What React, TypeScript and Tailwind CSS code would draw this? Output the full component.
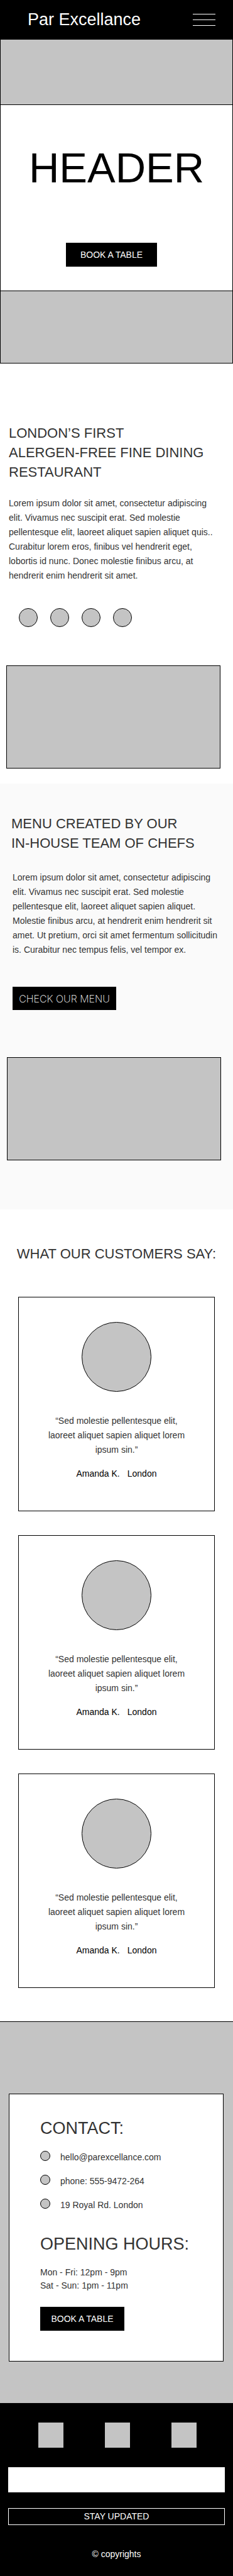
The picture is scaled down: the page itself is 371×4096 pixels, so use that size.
import type { ReactNode } from "react";

const DOTS = [1, 2, 3, 4];
const TESTIMONIALS = [1, 2, 3];
const SOCIALS = ["Facebook", "Instagram", "Twitter"];

const CONTACTS = [
  { text: "hello@parexcellance.com", href: "mailto:hello@parexcellance.com" },
  { text: "phone: 555-9472-264", href: "tel:5559472264" },
  { text: "19 Royal Rd. London", href: "#map" },
];

function Picture({ className }: { className: string }) {
  return <div className={`h-[164px] border border-black bg-[#c4c4c4] ${className}`} />;
}

function Title({ children, className }: { children: ReactNode; className: string }) {
  return <h2 className={`text-[22px] leading-[31px] ${className}`}>{children}</h2>;
}

function Testimonial() {
  return (
    <figure className="flex flex-col items-center border border-black bg-white pt-[39px] pb-[47px] text-center">
      <div className="size-[111px] rounded-full border border-black bg-[#c4c4c4]" />
      <blockquote className="mt-[35px] leading-[23px]">
        “Sed molestie pellentesque elit,
        <br />
        laoreet aliquet sapien aliquet lorem
        <br />
        ipsum sin.”
      </blockquote>
      <figcaption className="mt-[15px] flex gap-3 leading-[23px] text-black">
        <span>Amanda K.</span>
        <span>London</span>
      </figcaption>
    </figure>
  );
}

export default function App() {
  return (
    <div className="bg-white font-['Liberation_Sans',Arial,sans-serif] text-[14px] text-[#333333]">
      <header className="flex h-[62px] items-center justify-between bg-black pr-7 pl-11">
        <a href="#top" className="text-[27px] leading-9 text-white">
          Par Excellance
        </a>
        <button type="button" aria-label="Open menu" className="flex w-9 flex-col gap-2">
          <span className="h-px w-full bg-white" />
          <span className="h-px w-full bg-white" />
          <span className="h-px w-full bg-white" />
        </button>
      </header>

      <main>
        <section className="border border-black bg-[#c4c4c4] pt-[103px] pb-[114px]">
          <div className="flex flex-col items-center border-y border-black bg-white pt-[60px] pb-[38px]">
            <h1 className="text-[67px] leading-[80px] text-black">HEADER</h1>
            <button type="button" className="mt-[79px] mr-4 h-[38px] w-[145px] bg-black text-white">
              BOOK A TABLE
            </button>
          </div>
        </section>

        <section className="pt-[95px] pb-6">
          <Title className="px-3.5">
            LONDON’S FIRST
            <br />
            ALERGEN-FREE FINE DINING
            <br />
            RESTAURANT
          </Title>
          <p className="mt-[23px] px-3.5 leading-[23px]">
            Lorem ipsum dolor sit amet, consectetur adipiscing
            <br />
            elit. Vivamus nec suscipit erat. Sed molestie
            <br />
            pellentesque elit, laoreet aliquet sapien aliquet quis..
            <br />
            Curabitur lorem eros, finibus vel hendrerit eget,
            <br />
            lobortis id nunc. Donec molestie finibus arcu, at
            <br />
            hendrerit enim hendrerit sit amet.
          </p>
          <div className="mt-10 flex gap-5 pl-[30px]">
            {DOTS.map((n) => (
              <span key={n} className="size-[30px] rounded-full border border-black bg-[#c4c4c4]" />
            ))}
          </div>
          <Picture className="mt-[61px] mr-5 ml-2.5" />
        </section>

        <section className="bg-[#fafafa] pt-12 pb-[78px]">
          <Title className="px-[18px]">
            MENU CREATED BY OUR
            <br />
            IN-HOUSE TEAM OF CHEFS
          </Title>
          <p className="mt-7 pl-5 leading-[23px]">
            Lorem ipsum dolor sit amet, consectetur adipiscing
            <br />
            elit. Vivamus nec suscipit erat. Sed molestie
            <br />
            pellentesque elit, laoreet aliquet sapien aliquet.
            <br />
            Molestie finibus arcu, at hendrerit enim hendrerit sit
            <br />
            amet. Ut pretium, orci sit amet fermentum sollicitudin
            <br />
            is. Curabitur nec tempus felis, vel tempor ex.
          </p>
          <button
            type="button"
            className="mt-[47px] ml-5 block h-[37px] w-[165px] bg-black font-['Inter',sans-serif] text-[16px] font-extralight text-white"
          >
            CHECK OUR MENU
          </button>
          <Picture className="mt-[75px] mr-[19px] ml-[11px]" />
        </section>

        <section className="px-[29px] pt-[55px] pb-[53px]">
          <Title className="-mx-4 text-center">WHAT OUR CUSTOMERS SAY:</Title>
          <div className="mt-[53px] flex flex-col gap-[38px]">
            {TESTIMONIALS.map((n) => (
              <Testimonial key={n} />
            ))}
          </div>
        </section>

        <section className="border-t border-black bg-[#c4c4c4] pt-[114px] pr-[15px] pb-[66px] pl-3.5">
          <div className="border border-black bg-white pt-9 pr-6 pb-12 pl-[49px]">
            <h2 className="text-[27px] leading-9">CONTACT:</h2>
            <ul className="mt-[18px] flex flex-col gap-[18px] leading-5">
              {CONTACTS.map((c) => (
                <li key={c.text} className="flex items-start gap-4">
                  <span className="size-4 rounded-full border border-black bg-[#c4c4c4]" />
                  <a href={c.href}>{c.text}</a>
                </li>
              ))}
            </ul>
            <h2 className="mt-[34px] text-[27px] leading-9">OPENING HOURS:</h2>
            <p className="mt-[17px] leading-[21px]">
              Mon - Fri: 12pm - 9pm
              <br />
              Sat - Sun: 1pm - 11pm
            </p>
            <button type="button" className="mt-[23px] block h-[38px] w-[134px] bg-black text-white">
              BOOK A TABLE
            </button>
          </div>
        </section>
      </main>

      <footer className="bg-black pt-[31px] pb-[23px] text-white">
        <nav className="flex justify-between pr-[58px] pl-[61px]">
          {SOCIALS.map((name) => (
            <a key={name} href="#social" aria-label={name} className="size-10 bg-[#c4c4c4]" />
          ))}
        </nav>
        <form className="mt-[31px] flex flex-col px-[13px]">
          <input type="email" aria-label="Email address" className="h-10 bg-white px-3 text-black" />
          <button type="button" className="mt-[25px] h-[27px] border border-white">
            STAY UPDATED
          </button>
        </form>
        <p className="mt-[35px] text-center leading-[23px]">© copyrights</p>
      </footer>
    </div>
  );
}
